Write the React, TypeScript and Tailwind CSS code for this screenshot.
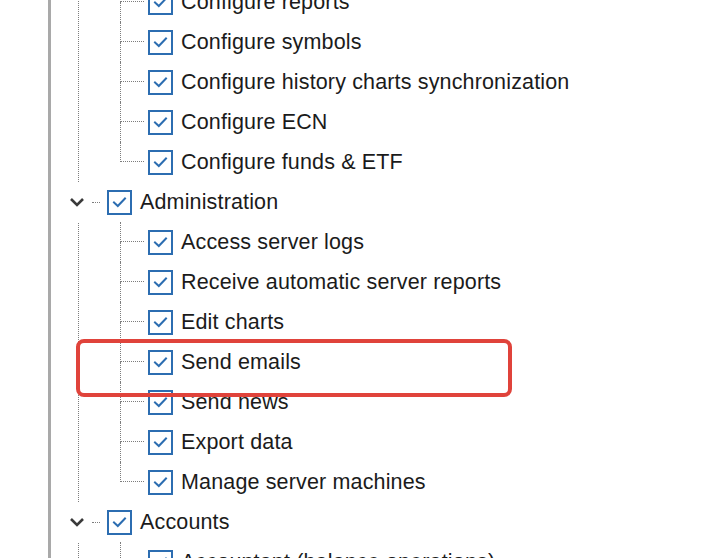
import React from "react";

type Node = { label: string; children?: string[] };

const topTail = [
  "Configure reports",
  "Configure symbols",
  "Configure history charts synchronization",
  "Configure ECN",
  "Configure funds & ETF",
];

const groups: Node[] = [
  {
    label: "Administration",
    children: [
      "Access server logs",
      "Receive automatic server reports",
      "Edit charts",
      "Send emails",
      "Send news",
      "Export data",
      "Manage server machines",
    ],
  },
  {
    label: "Accounts",
    children: ["Accountant (balance operations)", "Manage accounts"],
  },
];

function Check() {
  return (
    <div className="flex h-[25px] w-[25px] shrink-0 items-center justify-center border-2 border-[#2c6db1] bg-white">
      <svg width="15" height="12" viewBox="0 0 15 12" fill="none">
        <path d="M2 6.5 L5.8 10 L13 2.5" stroke="#2c6db1" strokeWidth="2" strokeLinecap="square" />
      </svg>
    </div>
  );
}

function Leaf({ label, last }: { label: string; last?: boolean }) {
  return (
    <div className="flex h-[40px] items-center">
      <div className="flex h-full w-[24px] flex-col">
        <div className="h-1/2 border-b border-l border-dotted border-[#7d7d7d]" />
        <div className={last ? "h-1/2" : "h-1/2 border-l border-dotted border-[#7d7d7d]"} />
      </div>
      <div className="ml-[4px]">
        <Check />
      </div>
      <span className="ml-[8px] whitespace-nowrap">{label}</span>
    </div>
  );
}

function Branch({ node }: { node: Node }) {
  return (
    <div className="flex flex-col">
      <div className="flex h-[40px] items-center">
        <div className="ml-[-11px] flex h-full w-[18px] items-center justify-center bg-white">
          <svg width="16" height="10" viewBox="0 0 16 10" fill="none">
            <path d="M2 2 L8 8 L14 2" stroke="#3a3a3a" strokeWidth="2.6" />
          </svg>
        </div>
        <div className="ml-[6px] w-[8px] border-t border-dotted border-[#7d7d7d]" />
        <div className="ml-[7px]">
          <Check />
        </div>
        <span className="ml-[8px] whitespace-nowrap">{node.label}</span>
      </div>
      <div className="flex flex-col pl-[41px]">
        {node.children?.map((c, i) => (
          <Leaf key={c} label={c} last={i === node.children!.length - 1} />
        ))}
      </div>
    </div>
  );
}

export default function App() {
  return (
    <div className="relative h-[558px] w-[716px] overflow-hidden bg-white font-['Liberation_Sans',Arial,sans-serif] text-[21.5px] tracking-[0.15px] text-[#1b1b1b]">
      <div className="ml-[48px] flex h-full flex-col border-l-[3px] border-[#a9a9a9]">
        <div className="ml-[27px] mt-[-18px] flex flex-col border-l border-dotted border-[#7d7d7d]">
          <div className="flex flex-col pl-[41px]">
            {topTail.map((t, i) => (
              <Leaf key={t} label={t} last={i === topTail.length - 1} />
            ))}
          </div>
          {groups.map((g) => (
            <Branch key={g.label} node={g} />
          ))}
        </div>
      </div>
      <div className="absolute left-[76px] top-[339px] h-[58px] w-[436px] rounded-[8px] border-4 border-[#e0433b]" />
    </div>
  );
}
